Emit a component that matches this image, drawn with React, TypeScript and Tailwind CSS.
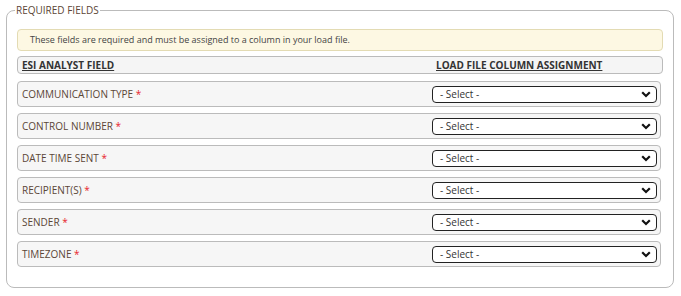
const FIELDS = [
  "COMMUNICATION TYPE",
  "CONTROL NUMBER",
  "DATE TIME SENT",
  "RECIPIENT(S)",
  "SENDER",
  "TIMEZONE",
];

function SelectBox() {
  return (
    <div className="w-[225px] h-[17px] border border-[#222] rounded-[4px] bg-white flex items-center justify-between pl-[7px] pr-[5px] text-[10px] text-[#333]">
      <span>- Select -</span>
      <svg width="10" height="7" viewBox="0 0 10 7">
        <path d="M1.2 1.3 L5 5 L8.8 1.3" fill="none" stroke="#111" strokeWidth="2.2" />
      </svg>
    </div>
  );
}

export default function App() {
  return (
    <div className="w-[681px] h-[296px] bg-white pt-[3px] px-[6px] font-['Open_Sans',sans-serif]">
      <fieldset className="w-[668px] h-[285px] border border-[#bbb] rounded-[8px] px-[10px] pb-[20px]">
        <legend className="ml-[-2px] px-[1px] text-[10px] text-[#5b4636] leading-[14px]">
          REQUIRED FIELDS
        </legend>
        <div className="mt-[12px] h-[22px] bg-[#fdf8e3] border border-[#e3dbb3] rounded-[4px] flex items-center pl-[12px] text-[9px] text-[#444]">
          These fields are required and must be assigned to a column in your load file.
        </div>
        <div className="mt-[5px] h-[18px] bg-[#f5f5f5] border border-[#bbb] rounded-[4px] flex items-center text-[10px] font-bold text-[#333]">
          <div className="w-[418px] pl-[4px] underline">ESI ANALYST FIELD</div>
          <div className="underline">LOAD FILE COLUMN ASSIGNMENT</div>
        </div>
        <div className="mt-[7px] flex flex-col gap-[6px] w-[644px]">
          {FIELDS.map((f) => (
            <div
              key={f}
              className="h-[26px] bg-[#f6f6f6] border border-[#bbb] rounded-[4px] flex items-center justify-between pl-[4px] pr-[3px]"
            >
              <span className="text-[10px] text-[#5b4636]">
                {f} <span className="text-[#e8232b]">*</span>
              </span>
              <SelectBox />
            </div>
          ))}
        </div>
      </fieldset>
    </div>
  );
}
